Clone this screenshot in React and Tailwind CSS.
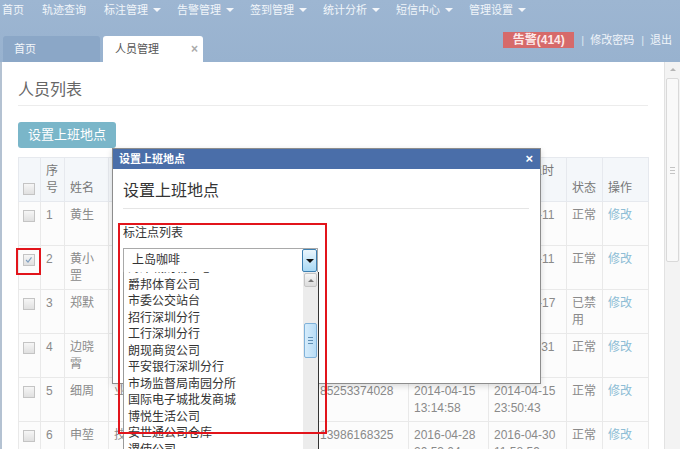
import React from "react";

const FONT = "font-['Liberation_Sans','Noto_Sans_CJK_SC',sans-serif]";

function Caret() {
  return <span className="ml-[5px] inline-block w-0 h-0 border-l-[4px] border-r-[4px] border-t-[4px] border-l-transparent border-r-transparent border-t-[#f3f6fa]" />;
}

function Cb({ checked }) {
  return (
    <span className="relative inline-block w-[12px] h-[12px] border border-[#c4c4c4] bg-gradient-to-b from-[#f6f6f6] to-[#e0e0e0] align-middle">
      {checked && (
        <svg viewBox="0 0 12 12" className="absolute left-0 top-0 w-[10px] h-[10px]">
          <path d="M2.5 6 L4.8 8.5 L9 2.8" fill="none" stroke="#7f9fc0" strokeWidth="1.4" />
        </svg>
      )}
    </span>
  );
}

// cells hidden behind the dialog are left empty
const rows = [
  { n: "1", name: "黄生", dept: "", acc: "", phone: "", d1: "", d2: "2016-05-11 09:12:33", st: "正常" },
  { n: "2", name: "黄小罡", dept: "", acc: "", phone: "", d1: "", d2: "2016-05-11 17:40:21", st: "正常", checked: true },
  { n: "3", name: "郑默", dept: "", acc: "", phone: "", d1: "", d2: "2015-03-17 18:05:12", st: "已禁用" },
  { n: "4", name: "边晓霄", dept: "", acc: "", phone: "", d1: "", d2: "2015-11-31 16:45:02", st: "正常" },
  { n: "5", name: "细周", dept: "业务部", acc: "", phone: "85253374028", d1: "2014-04-15 13:14:58", d2: "2014-04-15 23:50:43", st: "正常" },
  { n: "6", name: "申堃", dept: "技术部", acc: "", phone: "13986168325", d1: "2016-04-28 20:53:04", d2: "2016-04-30 11:58:59", st: "正常" },
];

const listItems = [
  "海岸城购物中心",
  "爵邦体育公司",
  "市委公交站台",
  "招行深圳分行",
  "工行深圳分行",
  "朗现商贸公司",
  "平安银行深圳分行",
  "市场监督局南园分所",
  "国际电子城批发商城",
  "博悦生活公司",
  "安世通公司仓库",
  "谡使公司",
];

export default function App() {
  const td = "border border-[#e9e9e9] px-[5px] py-[5px] align-top";
  const th = "border border-[#e6e9ee] px-[5px] py-[5px] align-bottom font-normal text-left";
  return (
    <div className={`relative w-[680px] h-[449px] overflow-hidden bg-white ${FONT}`}>
      {/* top bar */}
      <div className="h-[62px] bg-gradient-to-b from-[#9db6d2] to-[#98b2cf] flex flex-col">
        <div className="h-[20px] flex items-center pl-[2px] gap-[16px] text-[11px] leading-[20px] text-[#f1f5fa]">
          <span className="mr-[2px]">首页</span>
          <span className="mr-[2px]">轨迹查询</span>
          <span className="flex items-center">标注管理<Caret /></span>
          <span className="flex items-center">告警管理<Caret /></span>
          <span className="flex items-center">签到管理<Caret /></span>
          <span className="flex items-center">统计分析<Caret /></span>
          <span className="flex items-center">短信中心<Caret /></span>
          <span className="flex items-center">管理设置<Caret /></span>
        </div>
        <div className="mt-[12px] h-[30px] flex justify-between">
          <div className="self-end flex items-end">
            <div className="ml-[3px] w-[97px] h-[26px] bg-[#8ba7c7] rounded-t-[3px] text-[11px] leading-[26px] text-[#f3f6fa] pl-[11px]">首页</div>
            <div className="ml-[3px] w-[100px] h-[26px] bg-white rounded-t-[3px] text-[11px] leading-[26px] text-[#555] pl-[12px] flex justify-between pr-[5px]">
              <span>人员管理</span>
              <span className="text-[#aaa] text-[12px] font-bold">×</span>
            </div>
          </div>
          <div className="self-start flex items-center h-[16px] pr-[8px] text-[11px] text-[#f1f5fa]">
            <span className="w-[71px] h-[16px] bg-[#d66a6a] text-[#fde9e9] text-[12px] font-bold leading-[16px] text-center">告警(414)</span>
            <span className="ml-[7px] text-[#dfe7f0]">|</span>
            <span className="ml-[6px]">修改密码</span>
            <span className="ml-[7px] text-[#dfe7f0]">|</span>
            <span className="ml-[6px]">退出</span>
          </div>
        </div>
      </div>

      {/* content */}
      <div className="flex h-[387px]">
        <div className="w-[664px] border-l-2 border-[#b4c2d2] pl-[16px] pr-[16px]">
          <div className="pt-[17px] pb-[4px] border-b border-[#ececec] text-[16px] leading-[22px] text-[#666]">人员列表</div>
          <div className="mt-[16px] w-[98px] h-[26px] rounded-[3px] bg-[#7ab6c9] text-white text-[13px] leading-[26px] text-center">设置上班地点</div>
          <table className="mt-[9px] w-[630px] table-fixed border-collapse text-[12px] leading-[16.5px] text-[#8a8a8a]">
            <colgroup>
              <col className="w-[22px]" />
              <col className="w-[24px]" />
              <col className="w-[44px]" />
              <col className="w-[98px]" />
              <col className="w-[108px]" />
              <col className="w-[94px]" />
              <col className="w-[80px]" />
              <col className="w-[78px]" />
              <col className="w-[36px]" />
              <col className="w-[46px]" />
            </colgroup>
            <thead>
              <tr className="bg-[#f4f7fa] text-[#777]">
                <th className={`${th} pl-[4px] pb-[4px]`}><Cb /></th>
                <th className={th}>序号</th>
                <th className={th}>姓名</th>
                <th className={th}></th>
                <th className={th}></th>
                <th className={th}></th>
                <th className={th}></th>
                <th className={`${th} align-top`}>最后定位时</th>
                <th className={th}>状态</th>
                <th className={th}>操作</th>
              </tr>
            </thead>
            <tbody>
              {rows.map((r) => (
                <tr key={r.n} className="bg-[#fcfcfc]">
                  <td className={`${td} pl-[4px]`}><Cb checked={r.checked} /></td>
                  <td className={td}>{r.n}</td>
                  <td className={td}>{r.name}</td>
                  <td className={`${td} whitespace-nowrap overflow-hidden`}>{r.dept}</td>
                  <td className={td}>{r.acc}</td>
                  <td className={td}>{r.phone}</td>
                  <td className={td}>{r.d1}</td>
                  <td className={td}>{r.d2}</td>
                  <td className={td}>{r.st}</td>
                  <td className={`${td} text-[#8dbdd5]`}>修改</td>
                </tr>
              ))}
            </tbody>
          </table>
        </div>
        {/* page scrollbar */}
        <div className="w-[16px] bg-[#f3f3f3] border-l border-[#e2e2e2] flex flex-col items-center">
          <div className="h-[14px] flex items-center justify-center">
            <span className="w-0 h-0 border-l-[3px] border-r-[3px] border-b-[3px] border-l-transparent border-r-transparent border-b-[#b5b5b5]" />
          </div>
          <div className="mt-[2px] w-[13px] h-[184px] bg-[#f9f9f9] border border-[#d9d9d9] rounded-[2px] flex flex-col items-center justify-center gap-[2px]">
            <span className="w-[5px] h-px bg-[#c4c4c4]" />
            <span className="w-[5px] h-px bg-[#c4c4c4]" />
            <span className="w-[5px] h-px bg-[#c4c4c4]" />
          </div>
        </div>
      </div>

      {/* dialog */}
      <div className="absolute left-[112px] top-[148px] w-[429px] h-[236px] bg-white border border-[#8d8d8d] shadow-[0_2px_6px_rgba(0,0,0,0.15)]">
        <div className="h-[20px] bg-[#4a6ea9] flex items-center justify-between pl-[6px] pr-[7px] text-white">
          <span className="text-[11px] font-bold leading-[20px]">设置上班地点</span>
          <span className="text-[13px] font-bold leading-[20px]">×</span>
        </div>
        <div className="pl-[10px] pr-[11px]">
          <div className="pt-[11px] pb-[6px] border-b border-[#e5e5e5] text-[16px] leading-[22px] text-[#333]">设置上班地点</div>
          <div className="mt-[16px] text-[12px] leading-[17px] text-[#333]">标注点列表</div>
          <div className="relative mt-[6px] w-[195px] h-[25px] border border-[#a9a9a9] bg-white text-[12px] leading-[23px] text-[#333] pl-[8px]">
            上岛咖啡
            <div className="absolute right-0 top-0 bottom-0 w-[15px] bg-gradient-to-b from-[#eaf6fd] to-[#a9d9f4] border border-[#3c7fb1] rounded-[2px] flex items-center justify-center">
              <span className="w-0 h-0 border-l-[4px] border-r-[4px] border-t-[4px] border-l-transparent border-r-transparent border-t-[#111]" />
            </div>
          </div>
        </div>
      </div>

      {/* open dropdown list */}
      <div className="absolute left-[123px] top-[272px] w-[196px] h-[177px] bg-white border-l border-[#9a9a9a] border-r border-r-[#333] overflow-hidden">
        <div className="-mt-[12px] pl-[4px] text-[12px] leading-[16.5px] text-[#333]">
          {listItems.map((t) => (
            <div key={t}>{t}</div>
          ))}
        </div>
        <div className="absolute right-0 top-0 bottom-0 w-[15px] bg-[#ececec]">
          <div className="mx-[1px] mt-[1px] h-[14px] bg-gradient-to-b from-[#f6f6f6] to-[#dcdcdc] border border-[#c5c5c5] rounded-[2px] flex items-center justify-center">
            <span className="w-0 h-0 border-l-[3px] border-r-[3px] border-b-[3px] border-l-transparent border-r-transparent border-b-[#777]" />
          </div>
          <div className="absolute left-[1px] top-[51px] w-[13px] h-[35px] bg-gradient-to-r from-[#d6ecfb] to-[#b7dcf6] border border-[#7fb2da] rounded-[2px] flex flex-col items-center justify-center gap-[2px]">
            <span className="w-[5px] h-px bg-[#5f8fb5]" />
            <span className="w-[5px] h-px bg-[#5f8fb5]" />
            <span className="w-[5px] h-px bg-[#5f8fb5]" />
          </div>
        </div>
      </div>

      {/* red annotation boxes */}
      <div className="absolute left-[118px] top-[223px] w-[209px] h-[211px] border-2 border-[#e2141b]" />
      <div className="absolute left-[16px] top-[248px] w-[25px] h-[27px] border-2 border-[#e2141b]" />
    </div>
  );
}
